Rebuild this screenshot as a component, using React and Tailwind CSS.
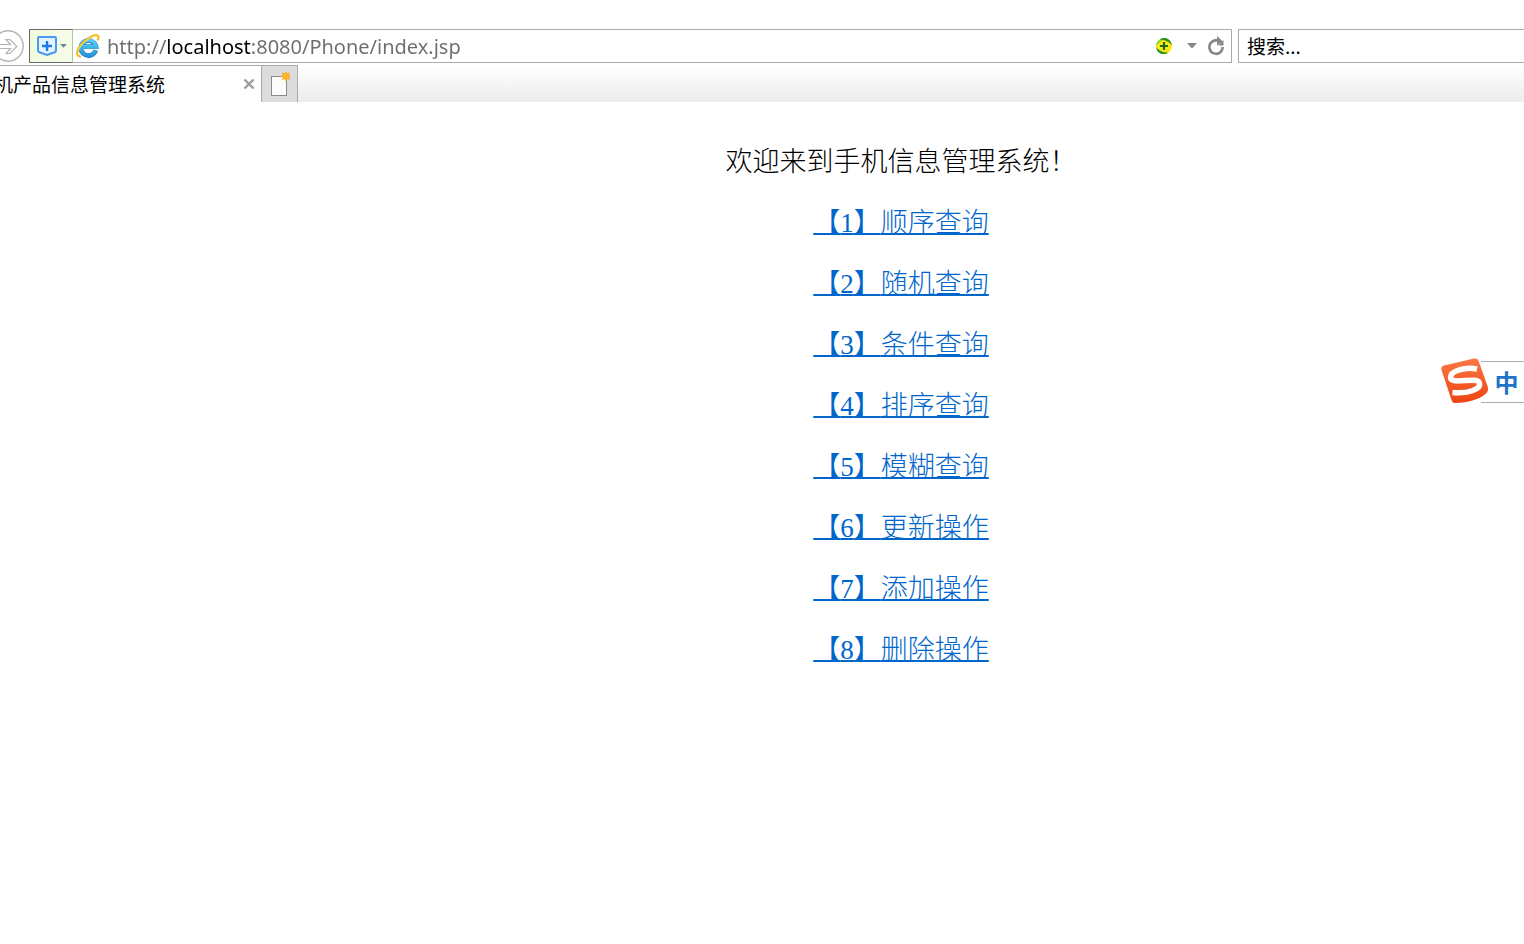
import React from 'react';

const menuItems = [
  { id: 1, label: '顺序查询' },
  { id: 2, label: '随机查询' },
  { id: 3, label: '条件查询' },
  { id: 4, label: '排序查询' },
  { id: 5, label: '模糊查询' },
  { id: 6, label: '更新操作' },
  { id: 7, label: '添加操作' },
  { id: 8, label: '删除操作' },
];

const ForwardIcon = () => (
  <svg width="32" height="32" viewBox="0 0 32 32" fill="none" stroke="#b4b4b4">
    <circle cx="16" cy="16" r="15.2" strokeWidth="1.4" />
    <path d="M7 14.500h11.500l-4.500-5h4l6.800 7-6.800 7h-4l4.500-5H7" strokeWidth="1.2" />
  </svg>
);

const ShieldIcon = () => (
  <svg width="20" height="20" viewBox="0 0 20 20" fill="none" stroke="#4a98f2">
    <path d="M2 1h16a1 1 0 0 1 1 1v12.500a2 2 0 0 1-1.300 1.800L10 19l-7.700-2.700A2 2 0 0 1 1 14.500V2a1 1 0 0 1 1-1z" fill="#e3f3ff" strokeWidth="2" />
    <path d="M10 5v10M5 10h10" stroke="#1c7bea" strokeWidth="2.400" />
  </svg>
);

const CaretIcon = ({ className, width, height }) => (
  <svg className={className} width={width} height={height} viewBox="0 0 10 6" fill="currentColor">
    <path d="M0 0h10L5 5.500z" />
  </svg>
);

const BrowserLogo = () => (
  <svg width="24" height="24" viewBox="0 0 24 24" fill="none">
    <defs>
      <linearGradient id="logo-blue" gradientUnits="userSpaceOnUse" x1="0" y1="3" x2="0" y2="22">
        <stop offset="0" stopColor="#6fd6fa" />
        <stop offset="0.5" stopColor="#3fbcf0" />
        <stop offset="1" stopColor="#2a93da" />
      </linearGradient>
    </defs>
    {/* dark rim under the letter, then the lighter body */}
    <path d="M19.800 16.300A7.600 7.600 0 1 1 20 12.500H7" stroke="#1a7fc4" strokeWidth="4.600" />
    <path d="M19.500 16.500A7.600 7.600 0 1 1 20 12.500H7" stroke="url(#logo-blue)" strokeWidth="3.400" />
    <path d="M4 22.500C-1 21.500 .8 15 7 8.800 13.500 2.300 20.500-.2 22 2c.7 1 .5 2.400 0 3.600" stroke="#f5b81f" strokeWidth="2.200" strokeLinecap="round" />
    <path d="M3 21C.8 19 2.700 14 7.500 9.200 13 3.700 19 1 21.200 2.200" stroke="#ffe57a" strokeWidth="0.8" />
  </svg>
);

const CompatIcon = () => (
  <svg width="18" height="18" viewBox="0 0 18 18">
    <circle cx="9" cy="9" r="7.900" fill="#ffe512" />
    <path d="M1 9C1 4 5.500.8 10.500 1.500 7.500 3 4 5.500 1 9z" fill="#8bd43b" />
    <path d="M5 2.400C9-.6 16 1.500 17 8.500 14.500 4.500 9.500 2.600 5 2.400z" fill="#27931b" />
    <path d="M1 10C1.800 16.500 8 19 13.500 15.600 8.500 15.600 4 14 1 10z" fill="#27931b" />
    <path d="M9 5v8M5 9h8" stroke="#16700f" strokeWidth="2.200" />
  </svg>
);

const RefreshIcon = () => (
  <svg width="18" height="20" viewBox="0 0 18 20" fill="none">
    <path d="M10.500 4.600A6.700 6.700 0 1 0 15.700 11" stroke="#868686" strokeWidth="2.600" />
    <path d="M10 0l5.600 5.200L10 9.500z" fill="#868686" />
    <path d="M16.500 4v5.500H11z" fill="#868686" />
  </svg>
);

const NewTabIcon = () => (
  <svg width="22" height="26" viewBox="0 0 22 26">
    <rect x="2.500" y="5.500" width="15" height="19" fill="#fcfcfc" stroke="#8a8a8a" />
    <path
      d="M17 .2l1.300 2.600 2.500-1.300-.8 2.700 2 1-2 1.100.9 2.600-2.500-.9L17 10.800l-1.400-2.800-2.700.9.900-2.600-2.300-1.100 2.300-1-.9-2.700 2.700 1.300z"
      fill="#f6a11a"
    />
    <circle cx="17" cy="5.300" r="3" fill="#ffb71f" />
  </svg>
);

const InputMethodLogo = () => (
  <svg width="48" height="46" viewBox="0 0 48 46">
    <defs>
      <linearGradient id="ime-orange" x1="0" y1="0" x2="0" y2="1">
        <stop offset="0" stopColor="#fb7845" />
        <stop offset="1" stopColor="#ee4411" />
      </linearGradient>
    </defs>
    <path
      d="M3 7.500L33 .6c2.500-.5 4 .4 4.700 2.700l9 25.200c1 3.200.2 5.500-2.500 7.700-7 5.500-17 8.500-29.500 8.800-2.200 0-3.500-.8-4.100-2.800L.5 12C0 9.500.7 8 3 7.500z"
      fill="url(#ime-orange)"
    />
    <path
      d="M36 11C24 8.500 9.500 13 9.500 19.500 9.500 27.500 37 18 38.500 25c1.500 6.500-12 11-27 9.500"
      fill="none"
      stroke="#fff"
      strokeWidth="5.500"
    />
  </svg>
);

const AddressBar = () => (
  <div className="flex flex-1 min-w-0 items-stretch border border-[#ababab] bg-white">
    <button
      aria-label="安全"
      className="-my-px -ml-px flex w-11 items-center gap-[3px] border border-r-[#b5c4a0] border-[#6a6a6a] bg-linear-to-r from-[#effadd] to-[#f6fde9] pl-[7px]"
    >
      <ShieldIcon />
      <CaretIcon className="text-[#6d8a8a]" width={7} height={4} />
    </button>
    <div className="flex items-center pl-[3px]">
      <BrowserLogo />
    </div>
    {/* the host part of the address is darker than the rest */}
    <input
      aria-label="地址"
      defaultValue="http://localhost:8080/Phone/index.jsp"
      className="ml-[7px] min-w-0 flex-1 bg-[linear-gradient(to_right,#6d6d6d_60px,#000_60px,#000_144px,#6d6d6d_144px)] bg-clip-text pt-px text-[20px] text-transparent caret-black outline-none [font-family:'Noto_Sans',sans-serif]"
    />
    <div className="flex items-center pr-[6px]">
      <button aria-label="兼容性">
        <CompatIcon />
      </button>
      <button aria-label="历史记录" className="ml-[14px]">
        <CaretIcon className="text-[#868686]" width={10} height={6} />
      </button>
      <button aria-label="刷新" className="ml-[10px]">
        <RefreshIcon />
      </button>
    </div>
  </div>
);

const TabStrip = () => (
  <div className="mt-[2px] flex h-[37px] bg-linear-to-b from-white to-[#ececec]">
    <div className="flex w-[261px] items-center justify-between overflow-hidden border-t border-[#ababab] bg-white pr-[6px]">
      <span className="-ml-[6px] whitespace-nowrap text-[19px] leading-6">机产品信息管理系统</span>
      <button aria-label="关闭标签页">
        <svg width="12" height="12" viewBox="0 0 12 12" stroke="#9c9c9c" strokeWidth="2.400">
          <path d="M1.500 1.500l9 9M10.500 1.500l-9 9" />
        </svg>
      </button>
    </div>
    <button
      aria-label="新建标签页"
      className="flex w-[37px] items-center justify-center border border-b-0 border-[#ababab] bg-[#dcdcdc]"
    >
      <NewTabIcon />
    </button>
  </div>
);

const App = () => (
  <div className="min-h-screen overflow-x-hidden bg-white text-black [font-family:'Noto_Sans_CJK_SC',sans-serif]">
    <header className="pt-[29px]">
      <div className="flex h-[34px] items-stretch">
        <button aria-label="前进" className="-ml-2 mr-[5px] flex w-8 shrink-0 items-center">
          <ForwardIcon />
        </button>
        <AddressBar />
        <input
          aria-label="搜索"
          placeholder="搜索..."
          className="ml-[6px] w-[286px] border border-r-0 border-[#ababab] bg-white pl-2 text-[19px] outline-none placeholder:text-black"
        />
      </div>
      <TabStrip />
    </header>

    <main className="flex flex-col items-center gap-[26px] pt-[43px] pl-[278px] text-[27px] leading-[35px] font-light [font-family:'Liberation_Serif','Noto_Sans_CJK_SC',serif]">
      <h1>欢迎来到手机信息管理系统！</h1>
      {menuItems.map(item => (
        <a
          key={item.id}
          href={`#${item.id}`}
          className="text-[#0066cc] underline decoration-2 underline-offset-1 [text-decoration-skip-ink:none]"
        >
          【{item.id}】{item.label}
        </a>
      ))}
    </main>

    {/* floating input method bar */}
    <aside className="fixed top-[358px] right-0 flex items-end">
      <div className="relative z-10">
        <InputMethodLogo />
      </div>
      <button className="mb-px -ml-2 h-[42px] w-[43px] border-y border-[#a9adb8] bg-white pl-2 text-2xl leading-none font-bold text-[#1e74c9]">
        中
      </button>
    </aside>
  </div>
);

export default App;
